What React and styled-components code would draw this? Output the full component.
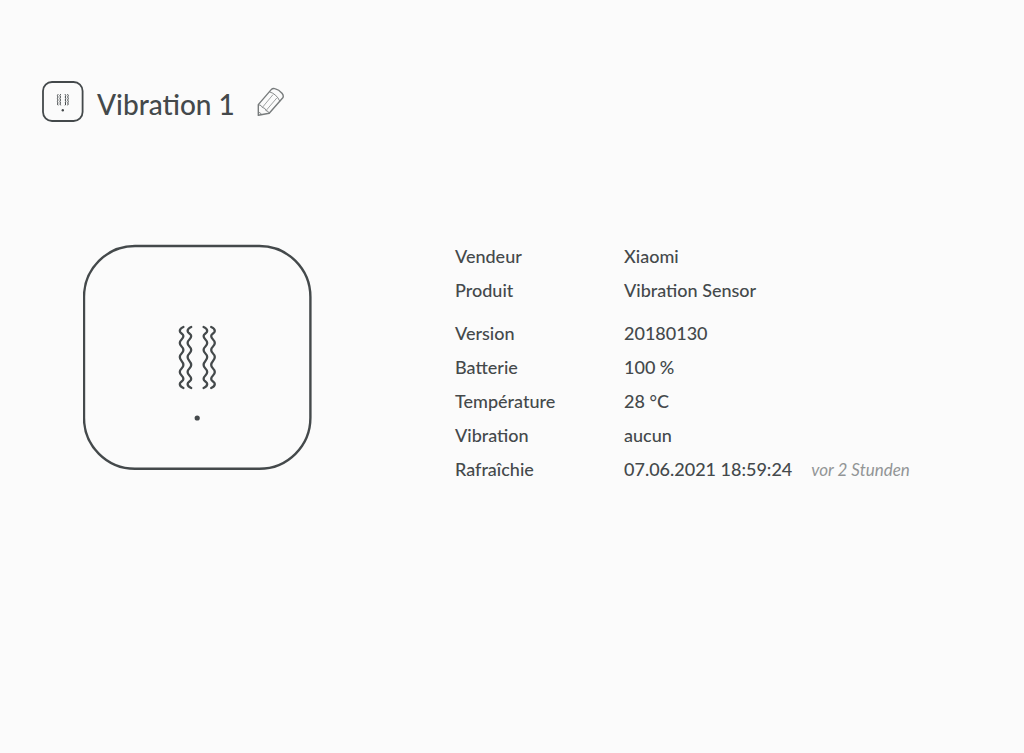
import React from "react";
import styled, { createGlobalStyle } from "styled-components";

const GlobalStyle = createGlobalStyle`
  * {
    box-sizing: border-box;
  }
  body {
    margin: 0;
    background: #fbfbfb;
    color: #44494b;
    font-family: Lato, sans-serif;
  }
`;

const Page = styled.main`
  padding: 81px 42px;
`;

const Header = styled.header`
  display: flex;
  align-items: center;
`;

const Title = styled.h1`
  margin: 4px 0 0 13px;
  font-size: 28px;
  line-height: 36px;
  font-weight: 500;
`;

const EditButton = styled.button`
  display: flex;
  margin-left: 22px;
  padding: 0;
  border: none;
  background: none;
  color: #777b7c;
  cursor: pointer;
`;

const Content = styled.section`
  display: flex;
  align-items: flex-start;
  margin-top: 122px;
  padding-left: 41px;
`;

const DeviceIcon = styled.svg`
  flex: none;
  width: ${(props) => props.$width}px;
  fill: none;
  stroke: currentColor;
  stroke-linecap: round;
`;

const Details = styled.table`
  margin-left: 142px;
  border-collapse: collapse;
  font-size: 18px;
  line-height: 24px;
  text-align: left;
`;

const Label = styled.th`
  width: 169px;
  padding: 0 0 10px;
  font-weight: 500;
  vertical-align: baseline;
`;

const Value = styled.td`
  padding: 0 0 10px;
  font-weight: 500;
  vertical-align: baseline;
  white-space: nowrap;
`;

const Group = styled.tbody`
  & + & > tr:first-child > * {
    padding-top: 9px;
  }
`;

const Ago = styled.em`
  margin-left: 19px;
  color: #929596;
  font-size: 17px;
  font-weight: 400;
  line-height: 1;
`;

const waves = [
  { x: 98.6, dir: -1 },
  { x: 106.4, dir: -1 },
  { x: 122.4, dir: 1 },
  { x: 130, dir: 1 },
];

const stops = [87, 92, 99, 106, 113, 121, 128, 135, 140];

const wavePath = ({ x, dir }) => {
  const near = x - dir * 1.8;
  const far = x + dir * 1.8;
  let d = `M${near} 83Q${far} 84.5 ${far} 87`;
  for (let i = 1; i < stops.length; i += 1) {
    const from = i % 2 ? far : near;
    const to = i % 2 ? near : far;
    const mid = (stops[i - 1] + stops[i]) / 2;
    d += `C${from} ${mid} ${to} ${mid} ${to} ${stops[i]}`;
  }
  return `${d}Q${far} 142.5 ${near} 144`;
};

const VibrationDevice = () => (
  <DeviceIcon $width={230} viewBox="0 0 230 226" aria-hidden="true">
    <rect
      x="1"
      y="2"
      width="226.4"
      height="222.8"
      rx="51"
      strokeWidth="2.4"
    />
    {waves.map((wave) => (
      <path key={wave.x} d={wavePath(wave)} strokeWidth="2.3" />
    ))}
    <circle cx="114.2" cy="174" r="2.6" fill="currentColor" stroke="none" />
  </DeviceIcon>
);

const VibrationBadge = () => (
  <DeviceIcon $width={42} viewBox="0 0 42 41" aria-hidden="true">
    <rect x="1" y="1" width="39.6" height="39" rx="9" strokeWidth="1.8" />
    <path
      d="M16 13.5l-.6 1 .6 1.5-.6 1.5.6 1.5-.6 1.5.6 1.5-.6 1 .6 1M18.5 13.5l-.6 1 .6 1.5-.6 1.5.6 1.5-.6 1.5.6 1.5-.6 1 .6 1M23.2 13.5l.6 1-.6 1.5.6 1.5-.6 1.5.6 1.5-.6 1.5.6 1-.6 1M25.7 13.5l.6 1-.6 1.5.6 1.5-.6 1.5.6 1.5-.6 1.5.6 1-.6 1"
      strokeWidth="1"
    />
    <circle cx="20.8" cy="29.3" r="1.2" fill="currentColor" stroke="none" />
  </DeviceIcon>
);

const Pencil = () => (
  <svg
    width="28"
    height="30"
    viewBox="0 0 28 30"
    fill="none"
    stroke="currentColor"
    strokeWidth="1.4"
    strokeLinejoin="round"
    aria-hidden="true"
  >
    <path d="M1.3 28.3V17.6L14.2 2.6Q15.6 1 17.8 1.6Q22 2.6 25 6.2Q27.2 9 25.6 11L12.2 26.2Z" />
    <path d="M1.4 17.7Q4.6 18 5.4 20.4Q8.6 21 9 23.6Q11.6 24 12.2 26.2" strokeWidth=".9" />
    <path d="M1.3 25.2Q4 25.6 4.6 27.8M12.4 4.8Q19.6 7 22.8 14.2" strokeWidth=".9" />
    <path d="M5.4 20.4L16 7.6M9 23.6L19.8 11" strokeWidth=".7" />
  </svg>
);

const product = [
  ["Vendeur", "Xiaomi"],
  ["Produit", "Vibration Sensor"],
];

const status = [
  ["Version", "20180130"],
  ["Batterie", "100 %"],
  ["Température", "28 °C"],
  ["Vibration", "aucun"],
  ["Rafraîchie", "07.06.2021 18:59:24", "vor 2 Stunden"],
];

const DetailRows = ({ rows }) => (
  <Group>
    {rows.map(([label, value, ago]) => (
      <tr key={label}>
        <Label scope="row">{label}</Label>
        <Value>
          {value}
          {ago && <Ago>{ago}</Ago>}
        </Value>
      </tr>
    ))}
  </Group>
);

function App() {
  return (
    <Page>
      <GlobalStyle />
      <Header>
        <VibrationBadge />
        <Title>Vibration 1</Title>
        <EditButton type="button" aria-label="Modifier le nom">
          <Pencil />
        </EditButton>
      </Header>
      <Content>
        <VibrationDevice />
        <Details>
          <DetailRows rows={product} />
          <DetailRows rows={status} />
        </Details>
      </Content>
    </Page>
  );
}

export default App;
